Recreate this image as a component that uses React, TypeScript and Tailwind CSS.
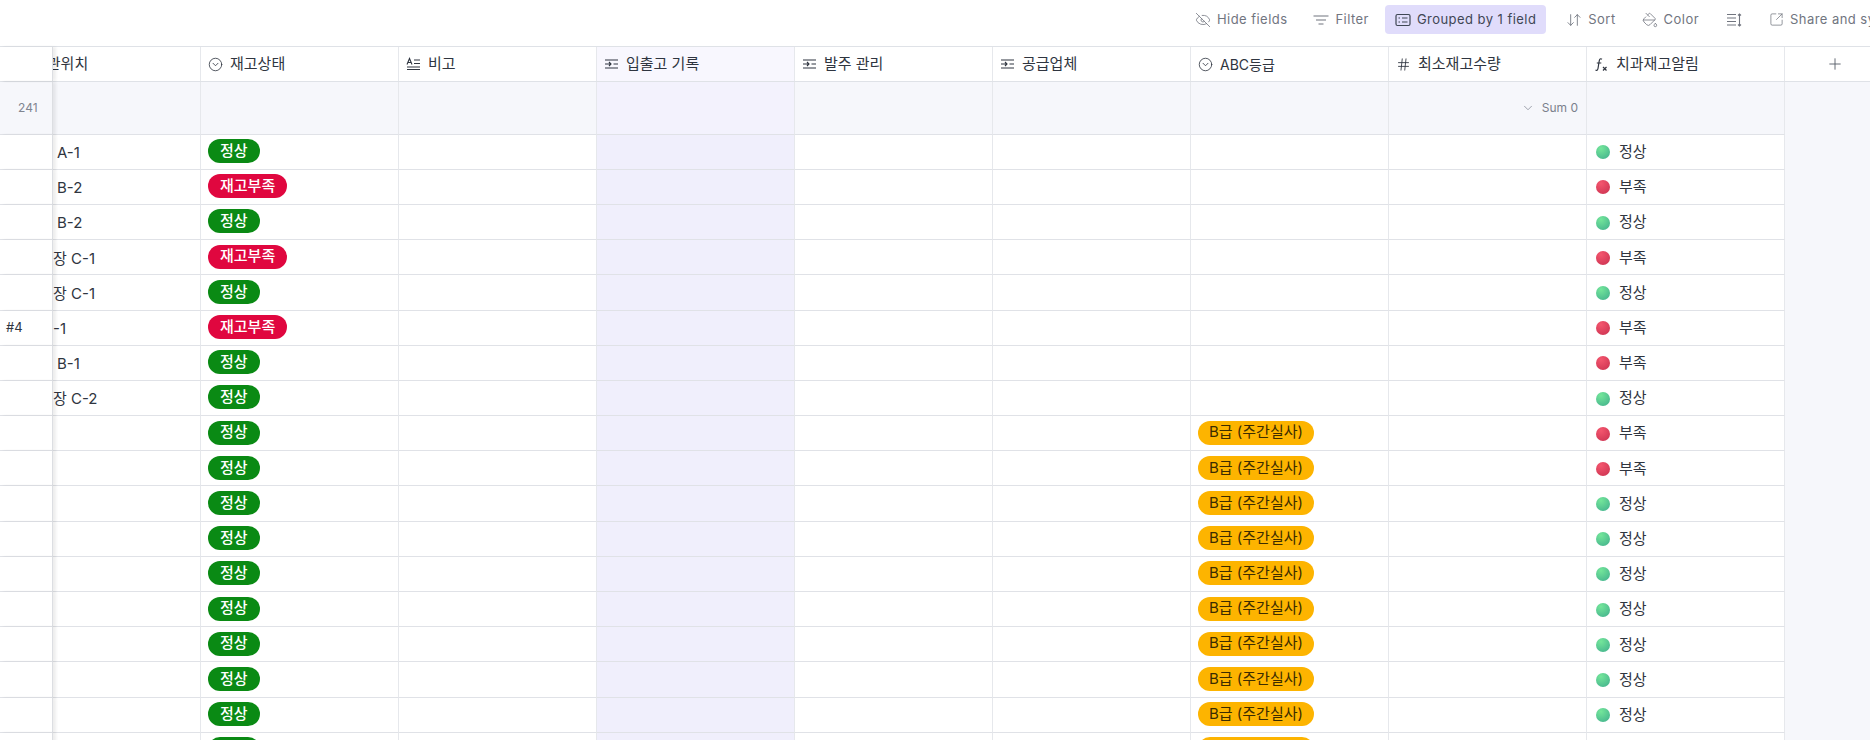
import type { ReactNode } from 'react';
import { ArrowDownUp, ChevronDown, CircleChevronDown, EyeOff, Hash, PaintBucket, Plus, SquareArrowOutUpRight } from 'lucide-react';

const GRID = 'grid grid-cols-[53px_148px_repeat(8,198px)_1fr]';

const LinkIcon = () => (
  <svg width="15" height="14" viewBox="0 0 15 14" fill="none" stroke="currentColor" strokeWidth="1.1" className="shrink-0">
    <path d="M1 3h13M1 7h6M5 5l2 2-2 2M9.500 7H14M1 11h13" />
  </svg>
);

const TextIcon = () => (
  <svg width="15" height="14" viewBox="0 0 15 14" fill="none" stroke="currentColor" strokeWidth="1.1" className="shrink-0">
    <path d="M1 7.500 3.500 1.500 6 7.500M2 5.500h3M8 3h6M8 6.500h6M1 10h13M1 12.500h13" />
  </svg>
);

const FxIcon = () => (
  <svg width="15" height="15" viewBox="0 0 15 15" fill="none" stroke="currentColor" strokeWidth="1.2" className="shrink-0">
    <path d="M8 2.200C6.500 1.200 5.500 2 5.200 4L4 11.500C3.700 13.300 2.800 13.800 1.500 13M2.800 6h4.500M9 10l3.500 3.500M12.500 10 9 13.500" />
  </svg>
);

const FilterIcon = () => (
  <svg width="16" height="14" viewBox="0 0 16 14" fill="none" stroke="currentColor" strokeWidth="1.200" className="shrink-0">
    <path d="M0.500 3h15M3 7h10M5.500 11h5" />
  </svg>
);

const GroupIcon = () => (
  <svg width="16" height="14" viewBox="0 0 16 14" fill="none" stroke="currentColor" strokeWidth="1.200" className="shrink-0">
    <rect x="1" y="1.500" width="14" height="11" rx="1.500" />
    <path d="M3.500 5h1.500M7 5h5.500M3.500 9h1.500M7 9h5.500" />
  </svg>
);

const RowHeightIcon = () => (
  <svg width="16" height="14" viewBox="0 0 16 14" fill="none" stroke="currentColor" strokeWidth="1.100" className="shrink-0">
    <path d="M1 1.500h9M1 5h9M1 8.500h9M1 12h9M13.500 1v12M12 2.500 13.500 1 15 2.500M12 11.500 13.500 13 15 11.500" />
  </svg>
);

const ToolButton = ({
  icon,
  label,
  active,
  className = '',
}: {
  icon: ReactNode;
  label?: string;
  active?: boolean;
  className?: string;
}) => (
  <div
    className={`flex h-[29px] shrink-0 items-center gap-[6px] rounded px-[10px] text-[13px] tracking-[0.45px] ${
      active ? 'bg-[#e0dcfb] text-[#3f4654]' : 'text-[#71757f]'
    } ${className}`}
  >
    {icon}
    {label && <span>{label}</span>}
  </div>
);

const columns: { icon: ReactNode; title: string; tint?: boolean; titleClass?: string }[] = [
  { icon: <CircleChevronDown size={15} strokeWidth={1.3} />, title: '재고상태' },
  { icon: <TextIcon />, title: '비고' },
  { icon: <LinkIcon />, title: '입출고 기록', tint: true },
  { icon: <LinkIcon />, title: '발주 관리' },
  { icon: <LinkIcon />, title: '공급업체' },
  { icon: <CircleChevronDown size={15} strokeWidth={1.3} />, title: 'ABC등급', titleClass: 'text-[14px]' },
  { icon: <Hash size={15} strokeWidth={1.4} />, title: '최소재고수량' },
  { icon: <FxIcon />, title: '치과재고알림' },
];

type Row = { no?: string; place?: string; offset?: string; low: boolean; graded: boolean; alert: boolean };

const rows: Row[] = [
  { place: 'A-1', offset: 'pl-[4px]', low: false, graded: false, alert: false },
  { place: 'B-2', offset: 'pl-[4px]', low: true, graded: false, alert: true },
  { place: 'B-2', offset: 'pl-[4px]', low: false, graded: false, alert: false },
  { place: '장 C-1', offset: 'pl-0', low: true, graded: false, alert: true },
  { place: '장 C-1', offset: 'pl-0', low: false, graded: false, alert: false },
  { no: '#4', place: '-1', offset: 'pl-0', low: true, graded: false, alert: true },
  { place: 'B-1', offset: 'pl-[4px]', low: false, graded: false, alert: true },
  { place: '장 C-2', offset: 'pl-0', low: false, graded: false, alert: false },
  { low: false, graded: true, alert: true },
  { low: false, graded: true, alert: true },
  ...Array.from({ length: 8 }, () => ({ low: false, graded: true, alert: false })),
];

const FROZEN = 'relative z-10 border-r border-b border-r-[#dcdee2] border-b-[#e0e2e7] shadow-[3px_0_3px_rgba(0,0,0,0.07)]';
const CELL = 'border-r border-b border-r-[#e6e8ec] border-b-[#e0e2e7]';

const App = () => {
  return (
    <div className="h-[740px] overflow-hidden bg-white font-['Inter','Noto_Sans_CJK_KR',sans-serif] text-[15px] text-[#2f3540]">
      <div className="flex h-[46px] items-start overflow-hidden pt-[5px] pl-[1185px]">
        <ToolButton icon={<EyeOff size={16} strokeWidth={1.2} />} label="Hide fields" />
        <ToolButton icon={<FilterIcon />} label="Filter" className="ml-[6px]" />
        <ToolButton icon={<GroupIcon />} label="Grouped by 1 field" active className="ml-[6px]" />
        <ToolButton icon={<ArrowDownUp size={16} strokeWidth={1.3} />} label="Sort" className="ml-[10px]" />
        <ToolButton icon={<PaintBucket size={16} strokeWidth={1.2} />} label="Color" className="ml-[6px]" />
        <ToolButton icon={<RowHeightIcon />} className="ml-[7px]" />
        <ToolButton icon={<SquareArrowOutUpRight size={15} strokeWidth={1.2} />} label="Share and sync" className="ml-[7px]" />
      </div>

      <div className={`${GRID} h-[36px] border-y border-y-[#dfe2e7] bg-white`}>
        <div className="relative z-10 border-r border-r-[#dcdee2] shadow-[3px_0_3px_rgba(0,0,0,0.07)]" />
        <div className="flex items-center overflow-hidden border-r border-r-[#e6e8ec]">
          <span className="-ml-[20px] shrink-0">보관위치</span>
        </div>
        {columns.map((col) => (
          <div
            key={col.title}
            className={`flex items-center gap-[7px] border-r border-r-[#e6e8ec] pl-[7px] ${col.tint ? 'bg-[#f8f7fe]' : ''}`}
          >
            {col.icon}
            <span className={col.titleClass}>{col.title}</span>
          </div>
        ))}
        <div className="flex items-center pl-[41px] text-[#555b66]">
          <Plus size={18} strokeWidth={1.2} />
        </div>
      </div>

      <div className={`${GRID} h-[52.6px] bg-[#f6f7fb]`}>
        <div className={`${FROZEN} flex items-center pl-[18px] text-[12px] text-[#808590]`}>241</div>
        <div className={CELL} />
        {columns.map((col) => (
          <div
            key={col.title}
            className={`${CELL} flex items-center justify-end gap-[7px] pr-[8px] text-[12px] text-[#7a808c] ${col.tint ? 'bg-[#f3f2fd]' : ''}`}
          >
            {col.title === '최소재고수량' && (
              <>
                <ChevronDown size={14} strokeWidth={1.2} />
                <span>Sum 0</span>
              </>
            )}
          </div>
        ))}
        <div />
      </div>

      {rows.map((row, i) => (
        <div key={i} className={`${GRID} h-[35.2px]`}>
          <div className={`${FROZEN} flex items-center bg-white pl-[6px] text-[13px]`}>{row.no}</div>
          <div className={`${CELL} flex items-center overflow-hidden bg-white pt-[3px] ${row.offset ?? ''}`}>
            {row.place}
          </div>
          <div className={`${CELL} flex items-start bg-white pt-[4.5px] pl-[7px]`}>
            <span
              className={`flex h-[24px] items-center rounded-full px-[12px] font-medium text-white ${
                row.low ? 'bg-[#e0073f]' : 'bg-[#0a8a14]'
              }`}
            >
              {row.low ? '재고부족' : '정상'}
            </span>
          </div>
          <div className={`${CELL} bg-white`} />
          <div className={`${CELL} bg-[#f0effc]`} />
          <div className={`${CELL} bg-white`} />
          <div className={`${CELL} bg-white`} />
          <div className={`${CELL} flex items-start bg-white pt-[4.5px] pl-[7px]`}>
            {row.graded && (
              <span className="flex h-[24px] items-center rounded-full bg-[#fdb400] px-[11px] text-[#3b2c00]">
                B급 (주간실사)
              </span>
            )}
          </div>
          <div className={`${CELL} bg-white`} />
          <div className={`${CELL} flex items-center gap-[9px] bg-white pt-[1px] pl-[9px]`}>
            <span
              className={`size-[14px] rounded-full ${
                row.alert
                  ? 'bg-[radial-gradient(circle_at_35%_25%,#f4566e,#c9304f)]'
                  : 'bg-[radial-gradient(circle_at_35%_25%,#74e69a,#3fae8c)]'
              }`}
            />
            <span>{row.alert ? '부족' : '정상'}</span>
          </div>
          <div className="bg-[#f6f7fb]" />
        </div>
      ))}
    </div>
  );
};

export default App;
